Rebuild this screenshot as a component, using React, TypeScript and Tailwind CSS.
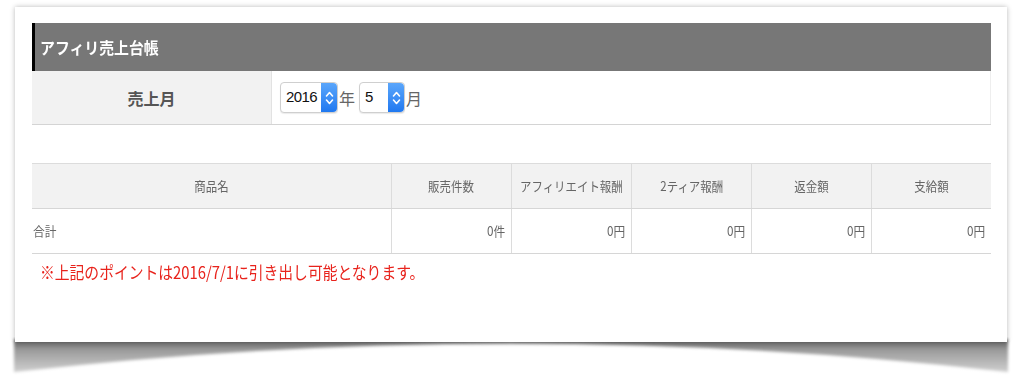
import React from "react";

const font = { fontFamily: '"Noto Sans CJK JP", "Liberation Sans", sans-serif' };

function Stepper() {
  return (
    <div className="flex h-full w-[16px] items-center justify-center rounded-r-[4px] bg-gradient-to-b from-[#5aa6fb] to-[#1f78f0]">
      <svg width="9" height="16" viewBox="0 0 9 16" fill="none" stroke="white" strokeWidth="1.6" strokeLinecap="round" strokeLinejoin="round">
        <path d="M1.5 6 L4.5 2.5 L7.5 6" />
        <path d="M1.5 10 L4.5 13.5 L7.5 10" />
      </svg>
    </div>
  );
}

function Select({ value, w }: { value: string; w: string }) {
  return (
    <div className={`flex h-[31px] ${w} items-stretch rounded-[4px] border border-[#cfcfcf] bg-white shadow-[0_1px_1px_rgba(0,0,0,0.08)]`}>
      <div className="flex flex-1 items-center pl-[5px] text-[15px] tracking-[-0.6px] text-[#111]" style={{ fontFamily: '"Liberation Sans", sans-serif' }}>
        {value}
      </div>
      <Stepper />
    </div>
  );
}

export default function App() {
  const headers = ["販売件数", "アフィリエイト報酬", "2ティア報酬", "返金額", "支給額"];
  const values = ["0件", "0円", "0円", "0円", "0円"];
  return (
    <div className="relative h-[380px] w-[1019px] overflow-hidden bg-white" style={font}>
      <svg className="absolute left-0 top-[337px]" width="1019" height="43" viewBox="0 0 1019 43">
        <defs>
          <linearGradient id="g" x1="0" y1="0" x2="0" y2="1">
            <stop offset="0" stopColor="#606060" />
            <stop offset="0.35" stopColor="#9c9c9c" />
            <stop offset="1" stopColor="#cfcfcf" />
          </linearGradient>
          <filter id="b" x="-5%" y="-50%" width="110%" height="200%">
            <feGaussianBlur stdDeviation="1.8" />
          </filter>
        </defs>
        <path d="M14,2 L1008,2 L1008,35 Q511,-22 14,35 Z" fill="url(#g)" filter="url(#b)" />
      </svg>
      <div className="relative ml-[15px] mt-[7px] h-[335px] w-[992px] bg-white pl-[17px] pt-[16px] shadow-[0_0_5px_rgba(0,0,0,0.28)]">
        <div className="w-[959px]">
          <div className="flex h-[48px] items-center border-l-[3px] border-black bg-[#777777] pl-[5px] text-[16px] font-bold text-white">
            <span className="inline-block origin-left scale-x-[0.93]">アフィリ売上台帳</span>
          </div>
          <div className="flex h-[54px] border-b border-[#d4d4d4]">
            <div className="flex w-[240px] items-center justify-center border-r border-[#e2e2e2] bg-[#f2f2f2] text-[16px] font-bold text-[#555]">
              売上月
            </div>
            <div className="flex flex-1 items-center border-r border-[#eeeeee] bg-white pl-[8px] text-[16px] text-[#666]">
              <Select value="2016" w="w-[58px]" />
              <span className="ml-[1px]">年</span>
              <span className="ml-[4px]">
                <Select value="5" w="w-[46px]" />
              </span>
              <span className="ml-[1px]">月</span>
            </div>
          </div>
          <div className="mt-[38px] border-t border-[#dcdcdc]">
            <div className="flex h-[45px] border-b border-[#d6d6d6] bg-[#f2f2f2] text-[13px] text-[#666]">
              <div className="flex w-[360px] items-center justify-center border-r border-[#dcdcdc]">
                <span className="inline-block scale-x-[0.88]">商品名</span>
              </div>
              {headers.map((h, i) => (
                <div
                  key={h}
                  className={`flex w-[120px] items-center justify-center ${i < 4 ? "border-r border-[#dcdcdc]" : "flex-1"}`}
                >
                  <span className="inline-block whitespace-nowrap scale-x-[0.88]">{h}</span>
                </div>
              ))}
            </div>
            <div className="flex h-[45px] border-b border-[#d6d6d6] bg-white text-[13px] text-[#666]">
              <div className="flex w-[360px] items-center border-r border-[#dcdcdc] pl-[1px]">
                <span className="inline-block origin-left scale-x-[0.9]">合計</span>
              </div>
              {values.map((v, i) => (
                <div
                  key={i}
                  className={`flex w-[120px] items-center justify-end pr-[6px] ${i < 4 ? "border-r border-[#dcdcdc]" : "flex-1"}`}
                >
                  <span className="inline-block origin-right scale-x-[0.9]">{v}</span>
                </div>
              ))}
            </div>
          </div>
          <div className="mt-[6px] pl-[8px] text-[17px] leading-[24px] text-[#e8231c]">
            <span className="inline-block origin-left whitespace-nowrap scale-x-[0.87]">
              ※上記のポイントは2016/7/1に引き出し可能となります。
            </span>
          </div>
        </div>
      </div>
    </div>
  );
}
